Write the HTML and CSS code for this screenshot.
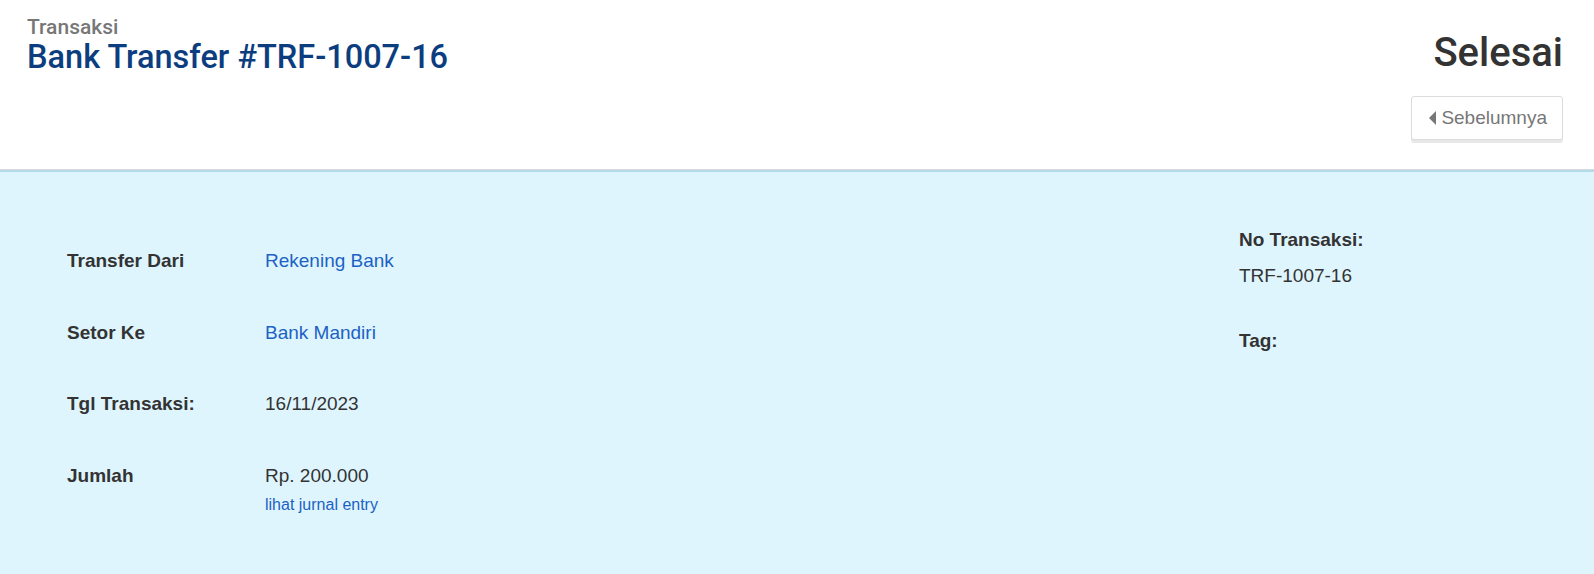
FILE: index.html
```html
<!DOCTYPE html>
<html lang="id">
<head>
  <meta charset="UTF-8" />
  <meta name="viewport" content="width=device-width, initial-scale=1.0" />
  <title>Bank Transfer #TRF-1007-16</title>
  <link rel="stylesheet" href="styles.css">
</head>
<body>
  <header class="page-header">
    <div class="judul">
      <div class="judul-kecil">Transaksi</div>
      <h1>Bank Transfer #TRF-1007-16</h1>
    </div>
    <div class="status">
      <div class="status-teks">Selesai</div>
      <a href="#" class="btn-kembali"><span class="caret"></span>Sebelumnya</a>
    </div>
  </header>

  <section class="detail">
    <div class="kolom-kiri">
      <div class="baris">
        <div class="label">Transfer Dari</div>
        <div class="nilai"><a href="#">Rekening Bank</a></div>
      </div>
      <div class="baris">
        <div class="label">Setor Ke</div>
        <div class="nilai"><a href="#">Bank Mandiri</a></div>
      </div>
      <div class="baris">
        <div class="label">Tgl Transaksi:</div>
        <div class="nilai">16/11/2023</div>
      </div>
      <div class="baris">
        <div class="label">Jumlah</div>
        <div class="nilai">
          Rp. 200.000
          <a href="#" class="link-kecil">lihat jurnal entry</a>
        </div>
      </div>
    </div>

    <div class="kolom-kanan">
      <div class="info">
        <div class="label">No Transaksi:</div>
        <div class="nilai">TRF-1007-16</div>
      </div>
      <div class="info">
        <div class="label">Tag:</div>
      </div>
    </div>
  </section>
</body>
</html>
```

FILE: styles.css
```css
* {
  box-sizing: border-box;
  margin: 0;
  padding: 0;
}
html, body {
  height: 100%;
}
body {
  font-family: 'Liberation Sans', Arial, sans-serif;
  font-size: 19px;
  color: #333;
  background: #dff5fe;
  display: flex;
  flex-direction: column;
}
a {
  color: #1b62c4;
  text-decoration: none;
}
.page-header {
  display: flex;
  justify-content: space-between;
  align-items: flex-start;
  background: #fff;
  padding: 16px 31px 29px 27px;
  border-bottom: 1px solid #d9d9d9;
}
.judul-kecil {
  font-family: Roboto, sans-serif;
  font-weight: 500;
  font-size: 21px;
  line-height: 22px;
  color: #777;
}
.judul h1 {
  font-family: Roboto, sans-serif;
  font-weight: 500;
  font-size: 32.5px;
  line-height: 35px;
  margin-top: 2px;
  color: #0c3d7f;
}
.status {
  display: flex;
  flex-direction: column;
  align-items: flex-end;
  padding-top: 13px;
}
.status-teks {
  font-family: Roboto, sans-serif;
  font-weight: 500;
  font-size: 40px;
  line-height: 48px;
  color: #333;
}
.btn-kembali {
  display: flex;
  align-items: center;
  margin-top: 19px;
  height: 44px;
  padding: 0 15px 0 17px;
  background: #fff;
  border: 1px solid #dcdcdc;
  border-radius: 3px;
  box-shadow: 0 3px 0 #e8e8e8;
  color: #777;
  font-size: 19px;
}
.caret {
  width: 0;
  height: 0;
  border-top: 7px solid transparent;
  border-bottom: 7px solid transparent;
  border-right: 7px solid #777;
  margin-right: 5px;
}
.detail {
  flex: 1;
  display: flex;
  border-top: 2px solid #b3dbeb;
  padding: 55px 0 0 67px;
}
.kolom-kiri {
  flex: 1;
  padding-top: 21px;
}
.baris {
  display: flex;
  line-height: 26px;
  margin-bottom: 45.5px;
}
.baris .label {
  width: 198px;
  font-weight: bold;
}
.link-kecil {
  display: block;
  font-size: 16px;
  line-height: 22px;
  margin-top: 5px;
}
.kolom-kanan {
  width: 355px;
}
.info {
  line-height: 26px;
  margin-bottom: 39px;
}
.info .label {
  font-weight: bold;
  margin-bottom: 10px;
}
```
